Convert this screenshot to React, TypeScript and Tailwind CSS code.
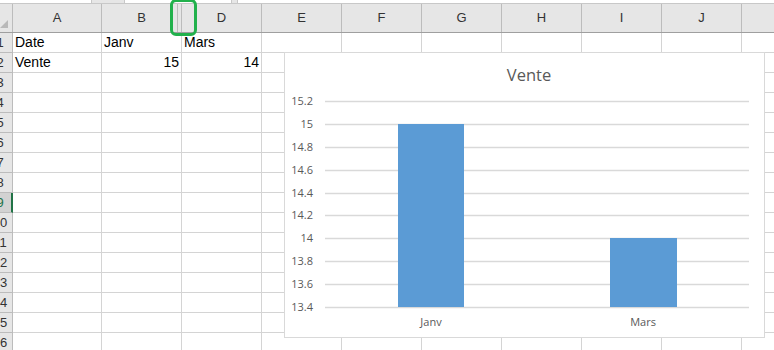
const cols = [
  { key: "A", w: "w-[89px]" },
  { key: "B", w: "w-[80px]" },
  { key: "D", w: "w-[80px]" },
  { key: "E", w: "w-[80px]" },
  { key: "F", w: "w-[80px]" },
  { key: "G", w: "w-[80px]" },
  { key: "H", w: "w-[80px]" },
  { key: "I", w: "w-[80px]" },
  { key: "J", w: "w-[80px]" },
  { key: "K", w: "w-[80px]" },
];

const cells: Record<string, { text: string; right?: boolean }> = {
  "1A": { text: "Date" },
  "1B": { text: "Janv" },
  "1D": { text: "Mars" },
  "2A": { text: "Vente" },
  "2B": { text: "15", right: true },
  "2D": { text: "14", right: true },
};

const rows = Array.from({ length: 16 }, (_, i) => i + 1);

function TopStrip() {
  return (
    <div className="flex h-[4px] bg-[#e6e6e6] border-b border-[#c8c8c8]">
      <div className="w-[92px] bg-white border-r border-[#c8c8c8]" />
      <div className="w-[32px]" />
      <div className="w-[108px] bg-white border-x border-[#c8c8c8]" />
      <div className="w-[5px]" />
      <div className="flex-1 bg-white border-l border-[#c8c8c8]" />
    </div>
  );
}

function HeaderRow() {
  return (
    <div className="flex h-[29px] bg-[#e6e6e6] border-b border-[#9f9f9f] text-[13px] text-[#333]">
      {/* corner */}
      <div className="w-[13px] shrink-0 border-r border-[#bcbcbc] relative">
        <svg width="12" height="28" className="absolute left-0 top-0">
          <polygon points="0,24 8,16 8,24" fill="#b9b9b9" />
        </svg>
      </div>
      <div className="w-[89px] shrink-0 border-r border-[#bcbcbc] flex items-center justify-center">A</div>
      <div className="w-[76px] shrink-0 border-r border-[#bcbcbc] flex items-center justify-center pl-[4px]">B</div>
      {/* hidden column C */}
      <div className="w-[4px] shrink-0 border-r border-[#bcbcbc]" />
      {cols.slice(2).map((c) => (
        <div key={c.key} className={`${c.w} shrink-0 border-r border-[#bcbcbc] flex items-center justify-center`}>
          {c.key === "K" ? "" : c.key}
        </div>
      ))}
    </div>
  );
}

function Row({ n }: { n: number }) {
  const selected = n === 9;
  return (
    <div className="flex h-[20px] text-[14px] text-black">
      <div
        className={`w-[13px] shrink-0 overflow-hidden border-b ${
          selected
            ? "bg-[#d2d2d2] border-r-2 border-r-[#217346] border-b-[#bcbcbc] text-[#217346]"
            : "bg-[#e6e6e6] border-r border-r-[#bcbcbc] border-b-[#bcbcbc] text-[#333]"
        }`}
      >
        <div className="w-[24px] -ml-[12px] text-center text-[13px] leading-[19px]">{n}</div>
      </div>
      {cols.map((c) => {
        const cell = cells[`${n}${c.key}`];
        return (
          <div
            key={c.key}
            className={`${c.w} shrink-0 border-r border-b border-[#d4d4d4] px-[2px] leading-[19px] whitespace-nowrap ${
              cell?.right ? "text-right" : ""
            }`}
          >
            {cell?.text}
          </div>
        );
      })}
    </div>
  );
}

function Chart() {
  const ticks = ["13.4", "13.6", "13.8", "14", "14.2", "14.4", "14.6", "14.8", "15", "15.2"];
  const y = (i: number) => 254 - i * 22.9;
  const x0 = 40;
  const x1 = 464;
  return (
    <div className="absolute left-[284px] top-[52px] w-[481px] h-[286px] bg-white border border-[#d9d9d9]">
      <svg width="479" height="284" className="font-['Open_Sans',sans-serif]">
        <text x="244" y="28" textAnchor="middle" fontSize="16.5" fill="#595959">
          Vente
        </text>
        {ticks.map((t, i) => (
          <g key={t}>
            <line x1={x0} x2={x1} y1={Math.round(y(i)) + 0.5} y2={Math.round(y(i)) + 0.5} stroke="#d9d9d9" strokeWidth="1.5" />
            <text x="28" y={Math.round(y(i)) + 4} textAnchor="end" fontSize="11" fill="#595959">
              {t}
            </text>
          </g>
        ))}
        <rect x="113" y={Math.round(y(8))} width="66" height={254 - Math.round(y(8))} fill="#5b9bd5" />
        <rect x="325" y={Math.round(y(3))} width="67" height={254 - Math.round(y(3))} fill="#5b9bd5" />
        <text x="146" y="273" textAnchor="middle" fontSize="11" fill="#595959">
          Janv
        </text>
        <text x="358" y="273" textAnchor="middle" fontSize="11" fill="#595959">
          Mars
        </text>
      </svg>
    </div>
  );
}

export default function App() {
  return (
    <div className="relative w-[774px] h-[350px] overflow-hidden bg-white font-['Liberation_Sans',sans-serif]">
      <TopStrip />
      <HeaderRow />
      {rows.map((n) => (
        <Row key={n} n={n} />
      ))}
      <Chart />
      {/* hidden column C marker */}
      <div className="absolute left-[170px] -top-[1px] w-[27px] h-[37px] rounded-[6px] border-[3px] border-[#22b14c]" />
    </div>
  );
}
